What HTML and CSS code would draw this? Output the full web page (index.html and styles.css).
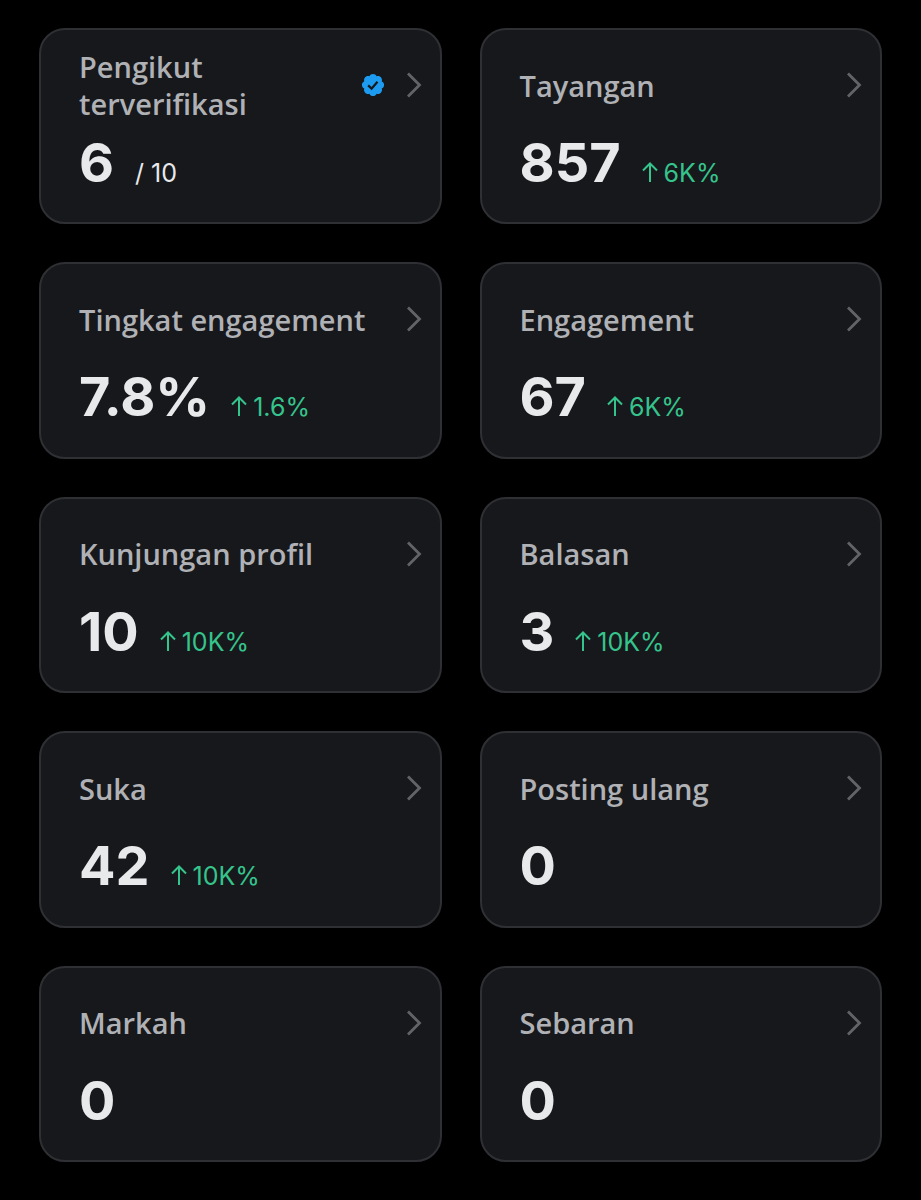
FILE: index.html
```
<!DOCTYPE html>
<html lang="id">
<head>
<meta charset="utf-8">
<meta name="viewport" content="width=device-width, initial-scale=1">
<title>Analitik</title>
<link rel="stylesheet" href="styles.css">
</head>
<body>
<svg class="defs" aria-hidden="true">
<symbol id="chevron" viewBox="0 0 16 26"><path d="M2 1.5L13.5 13L2 24.5" fill="none" stroke="currentColor" stroke-width="2.8"/></symbol>
<symbol id="up" viewBox="0 0 16 20"><path d="M8 20V2M1 8.5L8 1.5L15 8.5" fill="none" stroke="currentColor" stroke-width="2"/></symbol>
</svg>
<main class="stats">
<a class="card" href="#pengikut">
<div class="head"><span class="label">Pengikut terverifikasi</span>
<svg class="badge" viewBox="0 0 22 22"><path fill="#1d9bf0" d="M20.396 11c-.018-.646-.215-1.275-.57-1.816-.354-.54-.852-.972-1.438-1.246.223-.607.27-1.264.14-1.897-.131-.634-.437-1.218-.882-1.687-.47-.445-1.053-.75-1.687-.882-.633-.13-1.29-.083-1.897.14-.273-.587-.704-1.086-1.245-1.44S11.647 1.62 11 1.604c-.646.017-1.273.213-1.813.568s-.969.854-1.24 1.44c-.608-.223-1.267-.272-1.902-.14-.635.13-1.22.436-1.69.882-.445.47-.749 1.055-.878 1.688-.13.633-.08 1.29.144 1.896-.587.274-1.087.705-1.443 1.245-.356.54-.555 1.17-.574 1.817.02.647.218 1.276.574 1.817.356.54.856.972 1.443 1.245-.224.606-.274 1.263-.144 1.896.13.634.433 1.218.877 1.688.47.443 1.054.747 1.687.878.633.132 1.29.084 1.897-.136.274.586.705 1.084 1.246 1.439.54.354 1.17.551 1.816.569.647-.016 1.276-.213 1.817-.567s.972-.854 1.245-1.44c.604.239 1.266.296 1.903.164.636-.132 1.22-.447 1.68-.907.46-.46.776-1.044.908-1.681s.075-1.299-.165-1.903c.586-.274 1.084-.705 1.439-1.246.354-.54.551-1.17.569-1.816z"/><path fill="none" stroke="#16181c" stroke-width="1.9" d="M6.9 11.3L9.8 14.1L14.8 8.2"/></svg>
<svg class="chevron"><use href="#chevron"/></svg></div>
<div class="row"><span class="value">6</span><span class="goal">/ 10</span></div>
</a>
<a class="card" href="#tayangan">
<div class="head"><span class="label">Tayangan</span><svg class="chevron"><use href="#chevron"/></svg></div>
<div class="row"><span class="value">857</span><span class="change"><svg class="up"><use href="#up"/></svg>6K%</span></div>
</a>
<a class="card" href="#tingkat">
<div class="head"><span class="label">Tingkat engagement</span><svg class="chevron"><use href="#chevron"/></svg></div>
<div class="row"><span class="value">7.8%</span><span class="change"><svg class="up"><use href="#up"/></svg>1.6%</span></div>
</a>
<a class="card" href="#engagement">
<div class="head"><span class="label">Engagement</span><svg class="chevron"><use href="#chevron"/></svg></div>
<div class="row"><span class="value">67</span><span class="change"><svg class="up"><use href="#up"/></svg>6K%</span></div>
</a>
<a class="card" href="#kunjungan">
<div class="head"><span class="label">Kunjungan profil</span><svg class="chevron"><use href="#chevron"/></svg></div>
<div class="row"><span class="value">10</span><span class="change"><svg class="up"><use href="#up"/></svg>10K%</span></div>
</a>
<a class="card" href="#balasan">
<div class="head"><span class="label">Balasan</span><svg class="chevron"><use href="#chevron"/></svg></div>
<div class="row"><span class="value">3</span><span class="change"><svg class="up"><use href="#up"/></svg>10K%</span></div>
</a>
<a class="card" href="#suka">
<div class="head"><span class="label">Suka</span><svg class="chevron"><use href="#chevron"/></svg></div>
<div class="row"><span class="value">42</span><span class="change"><svg class="up"><use href="#up"/></svg>10K%</span></div>
</a>
<a class="card" href="#posting">
<div class="head"><span class="label">Posting ulang</span><svg class="chevron"><use href="#chevron"/></svg></div>
<div class="row"><span class="value">0</span></div>
</a>
<a class="card" href="#markah">
<div class="head"><span class="label">Markah</span><svg class="chevron"><use href="#chevron"/></svg></div>
<div class="row"><span class="value">0</span></div>
</a>
<a class="card" href="#sebaran">
<div class="head"><span class="label">Sebaran</span><svg class="chevron"><use href="#chevron"/></svg></div>
<div class="row"><span class="value">0</span></div>
</a>
</main>
</body>
</html>
```
FILE: styles.css
```
*{box-sizing: border-box;}
body{
	margin: 0;
	background: #000;
	color: #e7e9ea;
	font-family: Inter, "Liberation Sans", Arial, sans-serif;
}
.defs{display: none;}
.stats{
	display: grid;
	grid-template-columns: 1fr 1fr;
	grid-auto-rows: 1fr;
	gap: 38px;
	min-height: 100vh;
	padding: 28px 39px 38px;
}
.card{
	padding: 17px 18px 17px 38px;
	border: 2px solid #2f3034;
	border-radius: 26px;
	background: #17181c;
	color: inherit;
	text-decoration: none;
}
.head{
	display: flex;
	align-items: center;
	min-height: 76px;
}
.label{
	flex: 1;
	color: #b0b1b5;
	font-family: "Open Sans", sans-serif;
	font-size: 29px;
	font-weight: 600;
	line-height: 37px;
}
.badge{
	flex: none;
	width: 26px;
	height: 26px;
	margin-right: 20px;
}
.chevron{
	flex: none;
	width: 16px;
	height: 26px;
	color: #626367;
}
.row{
	display: flex;
	align-items: baseline;
	gap: 21px;
	margin-top: 8px;
}
.value{
	font-size: 54px;
	font-weight: bold;
	line-height: 64px;
}
.goal,.change{font-size: 25px;}
.change{color: #35c48c;}
.up{
	width: 16px;
	height: 20px;
	margin-right: 6px;
}
```
